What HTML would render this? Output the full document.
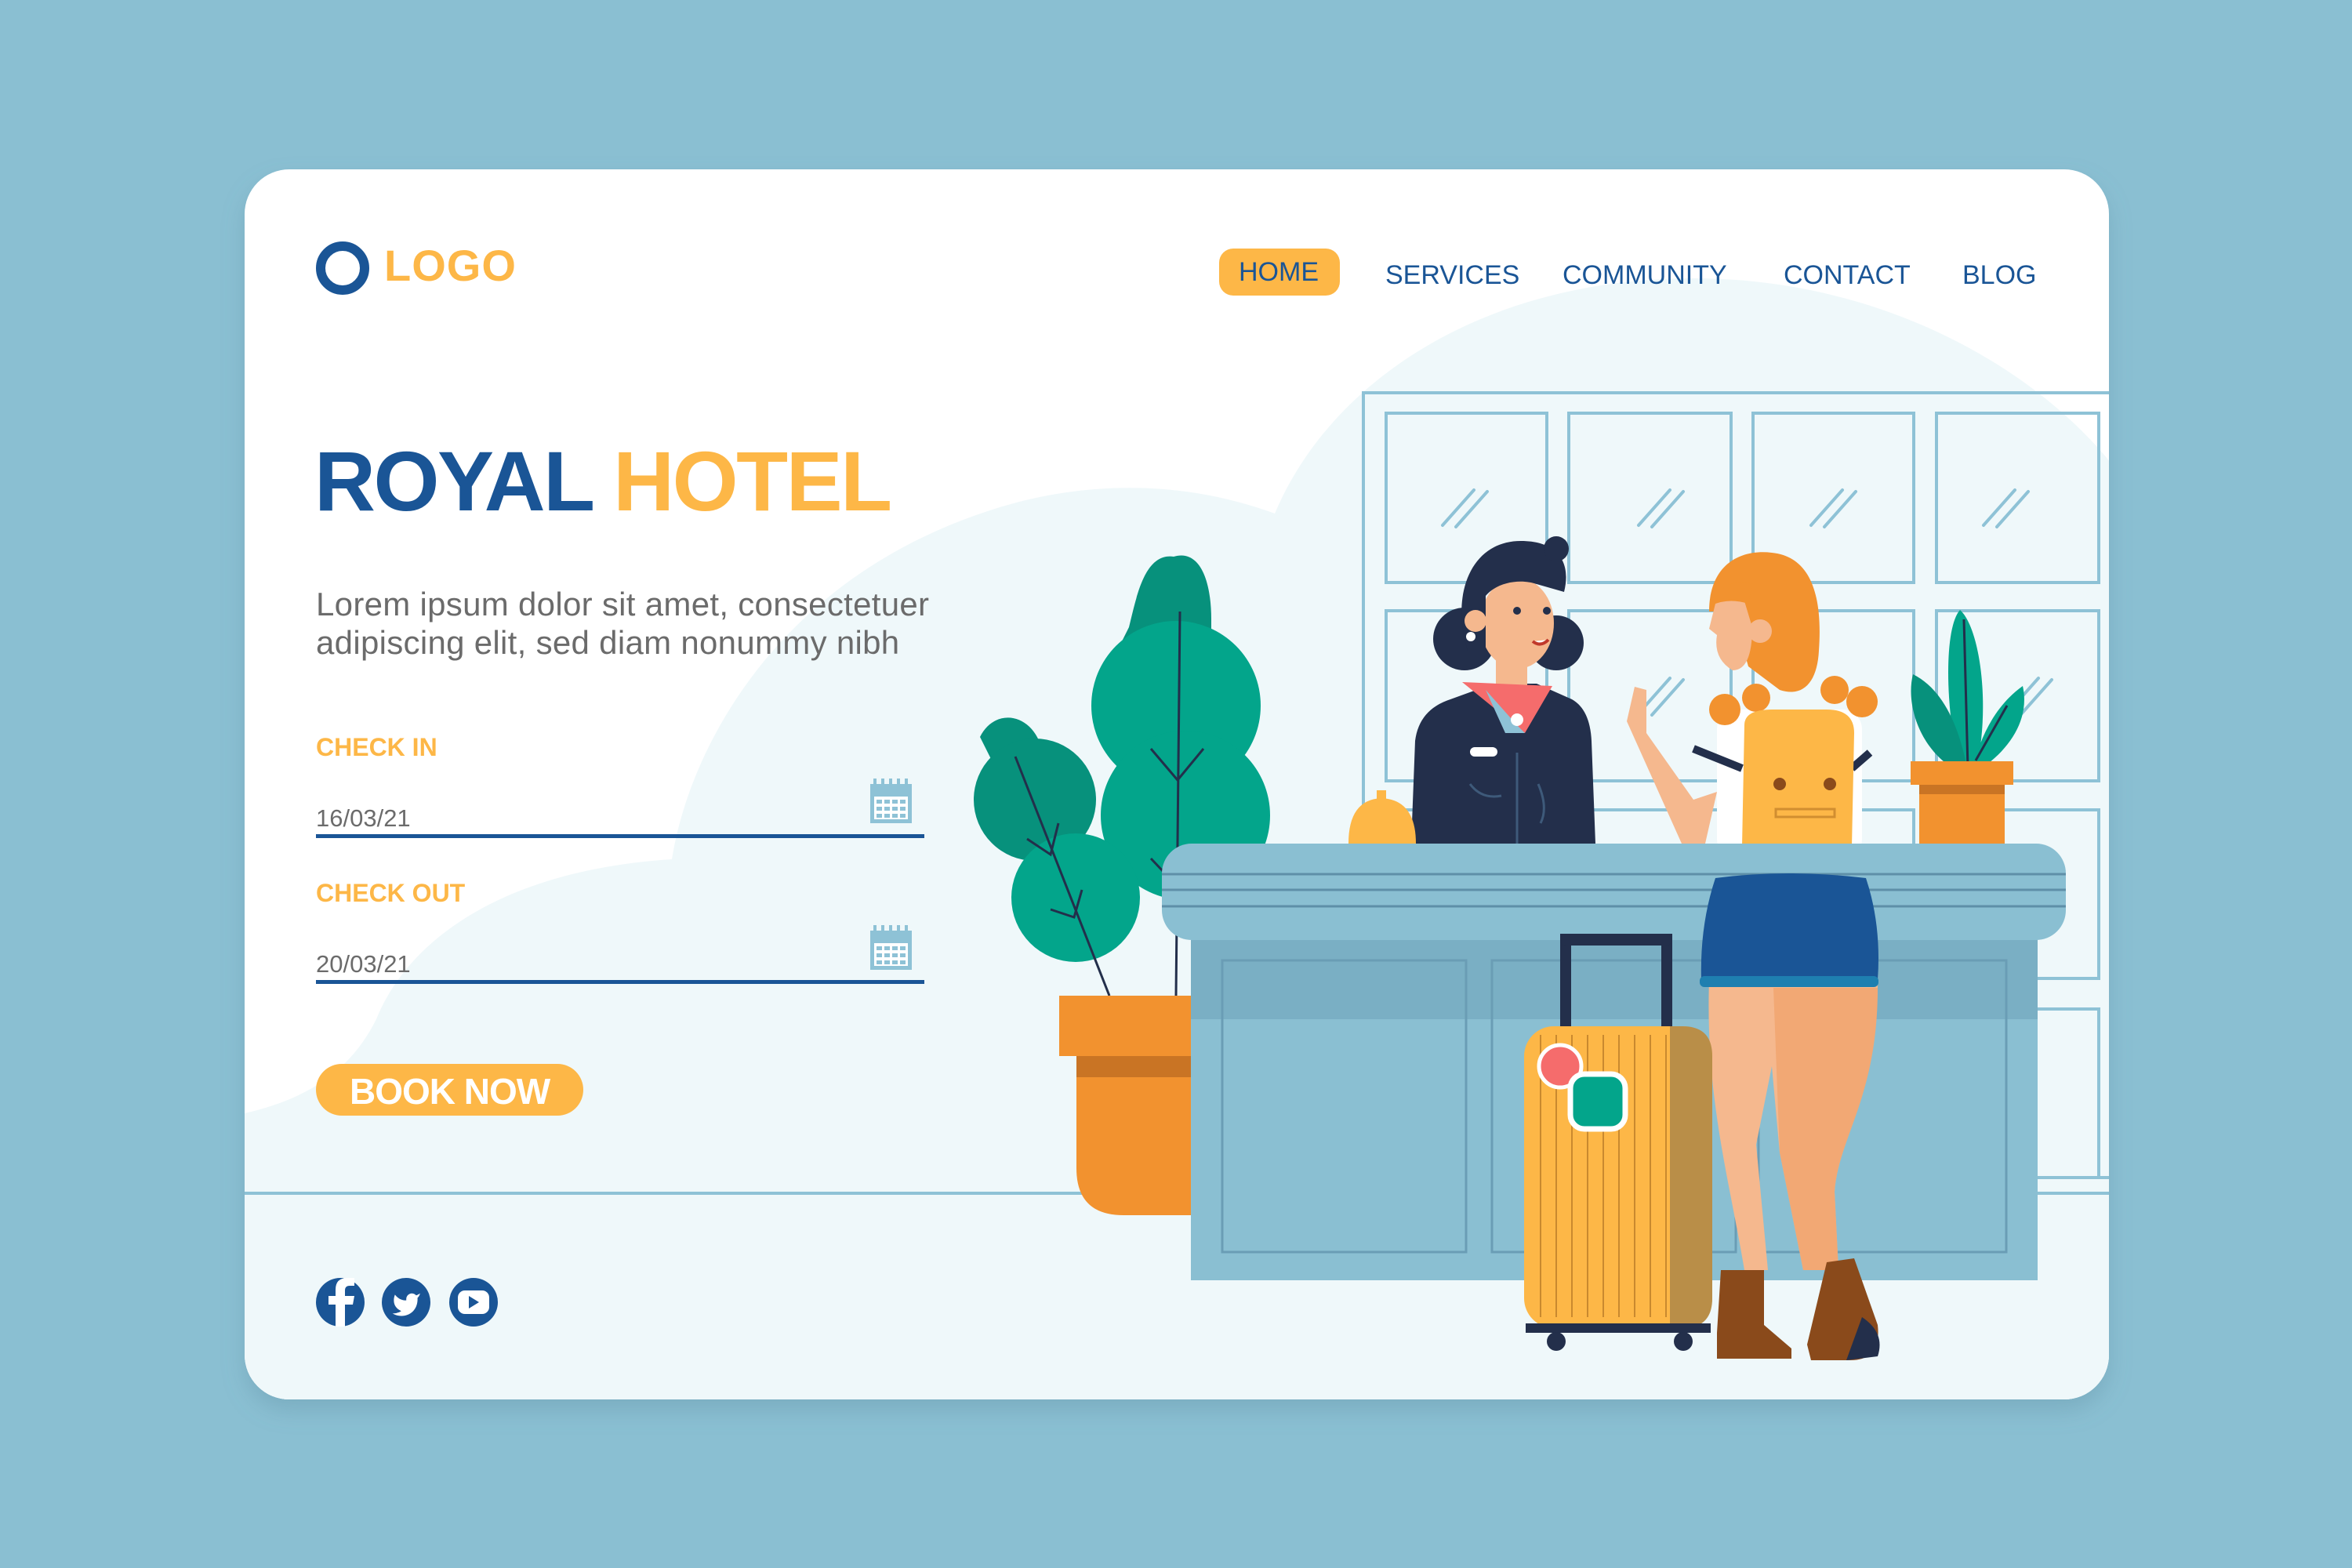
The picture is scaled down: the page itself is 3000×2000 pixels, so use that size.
<!DOCTYPE html>
<html><head><meta charset="utf-8"><style>
*{margin:0;padding:0;box-sizing:border-box}
body{width:3000px;height:2000px;background:#8abfd2;position:relative;overflow:hidden;font-family:"Liberation Sans",sans-serif}
.t{position:absolute;white-space:nowrap;line-height:1}
.nav{position:absolute;top:334px;font-size:34px;color:#1a5596;line-height:1}
</style></head><body>
<svg width="3000" height="2000" style="position:absolute;left:0;top:0">
<defs>
<clipPath id="card"><rect x="312" y="216" width="2378" height="1569" rx="57"/></clipPath>
<filter id="sh" x="-5%" y="-5%" width="110%" height="115%"><feDropShadow dx="0" dy="14" stdDeviation="14" flood-color="#5d8fa3" flood-opacity="0.35"/></filter>
</defs>
<rect x="312" y="216" width="2378" height="1569" rx="57" fill="#fff" filter="url(#sh)"/>
<g clip-path="url(#card)">
<path d="M312,1420 C400,1400 450,1360 480,1300 C520,1200 640,1110 857,1096 C880,950 1000,720 1300,640 C1420,610 1530,620 1626,655 C1700,480 1900,355 2160,355 C2400,355 2600,470 2700,600 L2700,1790 L312,1790 Z" fill="#eff8fa"/>
<rect x="312" y="1520" width="2378" height="270" fill="#eff8fa"/>
<line x1="312" y1="1522" x2="2690" y2="1522" stroke="#8ec2d6" stroke-width="4"/>
<g fill="none" stroke="#8ec2d6" stroke-width="4">
<path d="M1739,1520 L1739,501 L2700,501"/>
<rect x="1768" y="527" width="205" height="216"/><rect x="2001" y="527" width="207" height="216"/><rect x="2236" y="527" width="205" height="216"/><rect x="2470" y="527" width="207" height="216"/>
<rect x="1768" y="779" width="205" height="217"/><rect x="2001" y="779" width="207" height="217"/><rect x="2236" y="779" width="205" height="217"/><rect x="2470" y="779" width="207" height="217"/>
<rect x="1768" y="1033" width="205" height="215"/><rect x="2001" y="1033" width="207" height="215"/><rect x="2236" y="1033" width="205" height="215"/><rect x="2470" y="1033" width="207" height="215"/>
<rect x="2470" y="1287" width="207" height="215"/>
<path d="M2690,1502 L1739,1502"/>
</g>
<g stroke="#8ec2d6" stroke-width="4" stroke-linecap="round">
<path d="M1840,670 L1880,625 M1857,672 L1897,627 M2090,670 L2130,625 M2107,672 L2147,627 M2310,670 L2350,625 M2327,672 L2367,627 M2530,670 L2570,625 M2547,672 L2587,627"/>
<path d="M2090,910 L2130,865 M2107,912 L2147,867 M2560,910 L2600,865 M2577,912 L2617,867"/>
</g>
<path d="M1497,710 C1530,700 1545,740 1545,790 L1545,840 L1420,840 L1440,800 C1450,760 1460,705 1497,710Z" fill="#07917c"/>
<circle cx="1500" cy="900" r="108" fill="#03a58b"/>
<circle cx="1512" cy="1040" r="108" fill="#03a58b"/>
<path d="M1250,940 C1270,900 1320,910 1330,960 L1360,1000 L1300,1040 Z" fill="#07917c"/>
<circle cx="1320" cy="1020" r="78" fill="#07917c"/>
<circle cx="1372" cy="1145" r="82" fill="#03a58b"/>
<g stroke="#232f4b" stroke-width="3" fill="none">
<path d="M1505,780 L1500,1270 M1468,955 L1502,995 L1535,955 M1468,1095 L1501,1130 L1530,1095"/>
<path d="M1295,965 L1415,1270 M1310,1070 L1340,1090 L1350,1050 M1340,1160 L1370,1170 L1380,1135"/>
</g>
<rect x="1351" y="1270" width="175" height="77" fill="#f2922f"/>
<rect x="1373" y="1347" width="153" height="27" fill="#c97424"/>
<path d="M1373,1374 L1526,1374 L1526,1550 L1433,1550 Q1373,1550 1373,1490Z" fill="#f2922f"/>
<!-- receptionist -->
<circle cx="1868" cy="815" r="40" fill="#232f4b"/>
<circle cx="1985" cy="820" r="35" fill="#232f4b"/>
<path d="M1800,1076 L1805,945 Q1810,905 1850,892 L1905,872 L1960,872 L2005,892 Q2028,905 2030,945 L2035,1076 Z" fill="#232f4b"/>
<rect x="1908" y="835" width="40" height="45" fill="#f5b88e"/>
<path d="M1865,870 L1980,875 L1945,935 Z" fill="#f56c6c"/>
<path d="M1895,880 L1935,925 L1945,935 L1920,935 Z" fill="#8ec2d6"/>
<circle cx="1935" cy="918" r="8" fill="#fff"/>
<rect x="1875" y="953" width="35" height="12" rx="6" fill="#fff"/>
<path d="M1875,1000 Q1890,1020 1915,1015 M1962,1000 Q1975,1030 1965,1050 M1935,960 L1935,1076" stroke="#3e5a7a" stroke-width="3" fill="none"/>
<ellipse cx="1935" cy="795" rx="47" ry="58" fill="#f5b88e"/>
<path d="M1872,830 C1850,760 1875,690 1940,690 C1985,690 2005,715 1995,755 L1960,745 C1940,738 1910,742 1895,760 L1895,830Z" fill="#232f4b"/>
<circle cx="1985" cy="700" r="16" fill="#232f4b"/>
<circle cx="1882" cy="792" r="14" fill="#f5b88e"/>
<circle cx="1876" cy="812" r="6" fill="#fff"/>
<circle cx="1935" cy="779" r="5" fill="#232f4b"/><circle cx="1973" cy="779" r="5" fill="#232f4b"/>
<path d="M1955,818 Q1965,826 1975,816" stroke="#c0392b" stroke-width="4" fill="#fff"/>
<path d="M1720,1076 Q1720,1020 1762,1018 Q1806,1020 1806,1076Z" fill="#fdb747"/>
<rect x="1756" y="1008" width="12" height="12" fill="#fdb747"/>
<!-- right plant -->
<path d="M2500,985 C2480,900 2480,800 2500,778 C2525,800 2540,900 2520,985Z" fill="#03a58b"/>
<path d="M2500,985 C2450,960 2430,900 2440,860 C2480,880 2500,930 2510,985Z" fill="#07917c"/>
<path d="M2520,985 C2560,960 2590,920 2580,875 C2545,900 2525,940 2515,985Z" fill="#03a58b"/>
<path d="M2505,790 L2510,980 M2560,900 L2520,970" stroke="#232f4b" stroke-width="3" fill="none"/>
<rect x="2437" y="971" width="131" height="30" fill="#f2922f"/>
<rect x="2448" y="1001" width="109" height="12" fill="#c97424"/>
<path d="M2448,1013 L2557,1013 L2557,1076 L2448,1076Z" fill="#f2922f"/>
<!-- guest upper -->
<rect x="2190" y="905" width="185" height="190" rx="25" fill="#fff"/>
<path d="M2160,955 L2222,980 M2362,980 L2385,960" stroke="#232f4b" stroke-width="10"/>
<path d="M2075,920 L2085,876 L2100,880 L2100,935 L2160,1020 L2190,1010 L2175,1076 L2145,1076 Z" fill="#f5b88e"/>
<path d="M2180,780 C2180,720 2220,700 2260,705 C2310,710 2325,760 2320,830 C2318,870 2300,890 2270,880 L2230,850 L2210,780Z" fill="#f2922f"/>
<path d="M2188,770 Q2195,745 2220,750 L2235,800 Q2235,855 2210,855 Q2185,840 2190,810 L2180,802Z" fill="#f5b88e"/>
<path d="M2183,770 Q2200,735 2235,745 L2230,770 Q2205,762 2183,772Z" fill="#f2922f"/>
<circle cx="2245" cy="805" r="15" fill="#f5b88e"/>
<circle cx="2200" cy="905" r="20" fill="#f2922f"/><circle cx="2375" cy="895" r="20" fill="#f2922f"/>
<circle cx="2240" cy="890" r="18" fill="#f2922f"/><circle cx="2340" cy="880" r="18" fill="#f2922f"/>
<path d="M2225,925 Q2225,905 2260,905 L2330,905 Q2365,905 2365,935 L2362,1080 L2222,1080Z" fill="#fdb747"/>
<circle cx="2270" cy="1000" r="8" fill="#8a4a1b"/><circle cx="2334" cy="1000" r="8" fill="#8a4a1b"/>
<rect x="2265" y="1032" width="75" height="10" fill="none" stroke="#d18e30" stroke-width="3"/>
</g>
<!-- desk -->
<rect x="1519" y="1190" width="1080" height="443" fill="#8abfd2"/>
<rect x="1519" y="1199" width="1080" height="101" fill="#7aafc4"/>
<g fill="none" stroke="#6a9db5" stroke-width="3">
<rect x="1559" y="1225" width="311" height="372"/><rect x="1903" y="1225" width="311" height="372"/><rect x="2243" y="1225" width="316" height="372"/>
</g>
<rect x="1482" y="1076" width="1153" height="123" rx="38" fill="#8abfd2"/>
<path d="M1482,1115 L2635,1115 M1482,1135 L2635,1135 M1482,1156 L2635,1156" stroke="#5e8fa8" stroke-width="3"/>
<!-- guest lower -->
<path d="M2180,1250 L2395,1250 C2395,1400 2345,1450 2340,1520 L2345,1620 L2300,1620 L2270,1470 L2260,1360 L2240,1460 L2255,1620 L2225,1620 C2205,1500 2175,1400 2180,1250Z" fill="#f5b88e"/>
<path d="M2262,1260 L2395,1260 C2395,1400 2345,1450 2340,1520 L2345,1620 L2300,1620 L2270,1470Z" fill="#f2a874"/>
<path d="M2188,1120 Q2280,1108 2380,1120 Q2400,1180 2395,1250 L2170,1250 Q2168,1180 2188,1120Z" fill="#1a5596"/>
<rect x="2168" y="1245" width="228" height="14" rx="6" fill="#1e7fb0"/>
<path d="M2195,1620 L2250,1620 L2250,1690 L2285,1720 L2285,1733 L2190,1733 L2190,1700 Z" fill="#8a4a1b"/>
<path d="M2330,1610 L2365,1605 L2395,1690 Q2400,1735 2360,1735 L2310,1735 L2305,1715 Z" fill="#8a4a1b"/>
<path d="M2375,1680 Q2405,1700 2395,1730 L2355,1735 Z" fill="#232f4b"/>
<!-- suitcase -->
<path d="M1997,1309 L1997,1198 L2126,1198 L2126,1309" fill="none" stroke="#232f4b" stroke-width="14"/>
<rect x="1990" y="1192" width="142" height="14" rx="7" fill="#232f4b"/>
<rect x="1944" y="1309" width="240" height="385" rx="38" fill="#fdb747"/>
<path d="M2130,1309 L2146,1309 Q2184,1309 2184,1347 L2184,1656 Q2184,1694 2146,1694 L2130,1694Z" fill="#b98e48"/>
<g stroke="#c9892f" stroke-width="2"><path d="M1965,1320 V1680 M1985,1320 V1680 M2005,1320 V1680 M2025,1320 V1680 M2045,1320 V1680 M2065,1320 V1680 M2085,1320 V1680 M2105,1320 V1680 M2125,1320 V1680"/></g>
<rect x="1946" y="1688" width="236" height="12" fill="#232f4b"/>
<circle cx="1985" cy="1711" r="12" fill="#232f4b"/><circle cx="2147" cy="1711" r="12" fill="#232f4b"/>
<circle cx="1990" cy="1360" r="27" fill="#f56c6c" stroke="#fff" stroke-width="5"/>
<rect x="2003" y="1370" width="70" height="70" rx="18" fill="#03a58b" stroke="#fff" stroke-width="7"/>
<circle cx="437" cy="342" r="28" fill="none" stroke="#1a5596" stroke-width="12"/>
<rect x="403" y="1064" width="776" height="5" fill="#1a5596"/>
<rect x="403" y="1250" width="776" height="5" fill="#1a5596"/>
<g fill="#8ec2d6">
<rect x="1110" y="1000" width="53" height="50"/><rect x="1110" y="1187" width="53" height="50"/>
</g>
<g fill="#fff">
<rect x="1115" y="1016" width="43" height="29"/><rect x="1115" y="1203" width="43" height="29"/>
</g>
<g fill="#8ec2d6">
<path d="M1118,1020 h7v5h-7z M1128,1020 h7v5h-7z M1138,1020 h7v5h-7z M1148,1020 h7v5h-7z M1118,1029 h7v5h-7z M1128,1029 h7v5h-7z M1138,1029 h7v5h-7z M1148,1029 h7v5h-7z M1118,1038 h7v5h-7z M1128,1038 h7v5h-7z M1138,1038 h7v5h-7z M1148,1038 h7v5h-7z"/>
<path d="M1118,1207 h7v5h-7z M1128,1207 h7v5h-7z M1138,1207 h7v5h-7z M1148,1207 h7v5h-7z M1118,1216 h7v5h-7z M1128,1216 h7v5h-7z M1138,1216 h7v5h-7z M1148,1216 h7v5h-7z M1118,1225 h7v5h-7z M1128,1225 h7v5h-7z M1138,1225 h7v5h-7z M1148,1225 h7v5h-7z"/>
<path d="M1114,993 h4v9h-4z M1124,993 h4v9h-4z M1134,993 h4v9h-4z M1144,993 h4v9h-4z M1154,993 h4v9h-4z M1114,1180 h4v9h-4z M1124,1180 h4v9h-4z M1134,1180 h4v9h-4z M1144,1180 h4v9h-4z M1154,1180 h4v9h-4z"/>
</g>
<rect x="403" y="1357" width="341" height="66" rx="33" fill="#fdb747"/>
<circle cx="434" cy="1661" r="31" fill="#1a5596"/>
<path d="M440,1692 L440,1664 L450,1664 L452,1653 L440,1653 L440,1646 Q440,1640 446,1640 L452,1640 L452,1630 L443,1630 Q428,1630 428,1645 L428,1653 L419,1653 L419,1664 L428,1664 L428,1692Z" fill="#fff"/>
<circle cx="518" cy="1661" r="31" fill="#1a5596"/>
<path transform="translate(499,1645) scale(1.6)" d="M23 3a10.9 10.9 0 0 1-3.14 1.53 4.48 4.48 0 0 0-7.86 3v1A10.66 10.66 0 0 1 3 4s-4 9 5 13a11.64 11.64 0 0 1-7 2c9 5 20 0 20-11.5a4.5 4.5 0 0 0-.08-.83A7.72 7.72 0 0 0 23 3z" fill="#fff"/>
<circle cx="604" cy="1661" r="31" fill="#1a5596"/>
<rect x="584" y="1646" width="40" height="30" rx="9" fill="#fff"/>
<path d="M598,1653 L598,1669 L611,1661Z" fill="#1a5596"/>
</svg>

<div class="t" style="left:490px;top:311px;font-size:56px;font-weight:bold;color:#fdb747;letter-spacing:1px">LOGO</div>

<div style="position:absolute;left:1555px;top:317px;width:154px;height:60px;border-radius:18px;background:#fdb747"></div>
<div class="nav" style="left:1580px;top:330px">HOME</div>
<div class="nav" style="left:1767px">SERVICES</div>
<div class="nav" style="left:1993px">COMMUNITY</div>
<div class="nav" style="left:2275px">CONTACT</div>
<div class="nav" style="left:2503px">BLOG</div>

<div class="t" style="left:401px;top:560px;font-size:108px;font-weight:bold;letter-spacing:-2.5px"><span style="color:#1a5596">ROYAL</span> <span style="color:#fdb747">HOTEL</span></div>

<div class="t" style="left:403px;top:746px;font-size:42px;color:#6b6b6b;line-height:49px;letter-spacing:0.3px">Lorem ipsum dolor sit amet, consectetuer<br>adipiscing elit, sed diam nonummy nibh</div>

<div class="t" style="left:403px;top:937px;font-size:32px;font-weight:bold;color:#fdb747">CHECK IN</div>
<div class="t" style="left:403px;top:1028px;font-size:31px;color:#6b6b6b">16/03/21</div>
<div class="t" style="left:403px;top:1123px;font-size:32px;font-weight:bold;color:#fdb747">CHECK OUT</div>
<div class="t" style="left:403px;top:1214px;font-size:31px;color:#6b6b6b">20/03/21</div>
<div class="t" style="left:446px;top:1369px;font-size:46px;font-weight:bold;color:#fff;letter-spacing:-1px">BOOK NOW</div>
</body></html>
